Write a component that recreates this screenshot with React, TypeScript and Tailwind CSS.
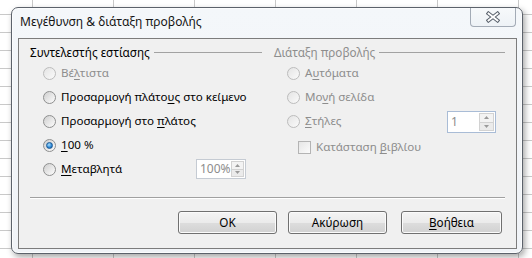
import React from "react";

const font = "font-['Noto_Sans',sans-serif]";

function Radio({ checked, disabled }: { checked?: boolean; disabled?: boolean }) {
  return (
    <span
      className={`flex h-[13px] w-[13px] shrink-0 items-center justify-center rounded-full border ${
        disabled
          ? "border-[#bcbcbc] bg-[linear-gradient(135deg,#e4e4e4,#fafafa)]"
          : "border-[#8e8f8f] bg-[linear-gradient(135deg,#cfcfcf,#fdfdfd)]"
      }`}
    >
      {checked && (
        <span className="h-[7px] w-[7px] rounded-full border border-[#1b5a96] bg-[radial-gradient(circle_at_40%_35%,#a8e0ff,#2c86d4_60%,#17558f)]" />
      )}
    </span>
  );
}

function Arrow({ up }: { up?: boolean }) {
  return (
    <svg width="5" height="3" viewBox="0 0 5 3">
      <path d={up ? "M0 3 L2.5 0 L5 3 Z" : "M0 0 L2.5 3 L5 0 Z"} fill="#9a9a9a" />
    </svg>
  );
}

function Spin({ value, blue, cls }: { value: string; blue?: boolean; cls: string }) {
  return (
    <div className={`flex border bg-white ${blue ? "border-[#a9bcd6]" : "border-[#c5cbd3]"} ${cls}`}>
      <span className="flex flex-1 items-center pl-[3px] text-[12px] text-[#8d8d8d]">{value}</span>
      <div className="my-[1px] mr-[1px] flex w-[15px] flex-col">
        <div className="flex flex-1 items-center justify-center border border-[#d2d2d2] bg-[#f3f3f3]">
          <Arrow up />
        </div>
        <div className="flex flex-1 items-center justify-center border border-t-0 border-[#d2d2d2] bg-[#ebebeb]">
          <Arrow />
        </div>
      </div>
    </div>
  );
}

function Heading({ children, muted }: { children: React.ReactNode; muted?: boolean }) {
  return (
    <div className="flex h-[16px] items-center">
      <span className={`text-[11.7px] leading-[16px] ${muted ? "text-[#8d8d8d]" : "text-black"}`}>{children}</span>
      <span className="ml-[4px] h-px flex-1 bg-[#a2a2a2]" />
    </div>
  );
}

function Row({
  children,
  checked,
  disabled,
  extra,
}: {
  children: React.ReactNode;
  checked?: boolean;
  disabled?: boolean;
  extra?: React.ReactNode;
}) {
  return (
    <div className="flex h-[24px] items-center pl-[13px]">
      <Radio checked={checked} disabled={disabled} />
      <span className={`ml-[5px] flex-1 text-[11.6px] ${disabled ? "text-[#8d8d8d]" : "text-black"}`}>{children}</span>
      {extra}
    </div>
  );
}

function Btn({ children, className = "" }: { children: React.ReactNode; className?: string }) {
  return (
    <div
      className={`flex h-[23px] w-[99px] items-center justify-center rounded-[3px] border border-[#707070] bg-[linear-gradient(to_bottom,#f4f4f4_0%,#ebebeb_50%,#dddddd_52%,#d1d1d1_100%)] text-[11.7px] text-black shadow-[inset_0_0_0_1px_#fbfbfb] ${className}`}
    >
      {children}
    </div>
  );
}

export default function App() {
  return (
    <div
      className={`h-[258px] w-[532px] overflow-hidden bg-white bg-[linear-gradient(to_right,#c9c9c9_1px,transparent_1px),linear-gradient(to_bottom,#c9c9c9_1px,transparent_1px)] bg-[size:81px_18px] bg-[position:32px_14px] pl-[11px] pt-[7px] ${font}`}
    >
      <div className="flex h-[247px] w-[512px] flex-col rounded-[7px] border border-[#5c626b] bg-[linear-gradient(to_bottom,#f4f7fa,#f0f3f7)] pb-[4px] pl-[6px] pr-[5px] shadow-[2px_3px_6px_rgba(0,0,0,0.35),inset_0_0_0_1px_#fbfcfd]">
        <div className="flex h-[30px] items-start">
          <span className="mt-[6px] ml-[2px] flex-1 text-[12px] leading-[16px] text-[#151515]">
            Μεγέθυνση &amp; διάταξη προβολής
          </span>
          <div className="mr-[1px] flex h-[19px] w-[46px] items-center justify-center rounded-b-[4px] border border-t-0 border-[#a3abb6] bg-[linear-gradient(to_bottom,#f7f9fb,#eef2f6)]">
            <svg width="14" height="12" viewBox="0 0 14 12">
              <path d="M2.5 2.5 L11.5 9.5 M11.5 2.5 L2.5 9.5" stroke="#5a626d" strokeWidth="3.8" strokeLinecap="square" />
              <path d="M2.5 2.5 L11.5 9.5 M11.5 2.5 L2.5 9.5" stroke="#ffffff" strokeWidth="1.8" strokeLinecap="square" />
            </svg>
          </div>
        </div>
        <div className="h-[211px] w-[499px] border border-[#7c7c7c] bg-[#f0f0f0] pl-[11px] pr-[11px] pt-[5px]">
          <div className="flex">
            <div className="w-[232px]">
              <Heading>Συντελεστής εστίασης</Heading>
              <div className="mt-[1px]">
                <Row disabled>
                  Βέ<span className="underline underline-offset-2">λ</span>τιστα
                </Row>
                <Row>
                  Προσαρμογή πλάτο<span className="underline underline-offset-2">υ</span>ς στο κείμενο
                </Row>
                <Row>
                  Προσαρμογή στο <span className="underline underline-offset-2">π</span>λάτος
                </Row>
                <Row checked>
                  <span className="underline underline-offset-2">1</span>00 %
                </Row>
                <Row extra={<Spin value="100%" cls="h-[20px] w-[50px] mr-[16px]" />}>
                  <span className="underline underline-offset-2">Μ</span>εταβλητά
                </Row>
              </div>
            </div>
            <div className="ml-[12px] w-[231px]">
              <Heading muted>Διάταξη προβολής</Heading>
              <div className="mt-[1px]">
                <Row disabled>
                  Α<span className="underline underline-offset-2">υ</span>τόματα
                </Row>
                <Row disabled>
                  Μο<span className="underline underline-offset-2">ν</span>ή σελίδα
                </Row>
                <Row disabled extra={<Spin value="1" blue cls="h-[22px] w-[49px] mr-[9px] mt-[2px]" />}>
                  <span className="underline underline-offset-2">Σ</span>τήλες
                </Row>
                <div className="mt-[4px] flex h-[20px] items-center pl-[24px]">
                  <span className="h-[13px] w-[13px] border border-[#b4b4b4] bg-[linear-gradient(135deg,#e6e6e6,#fbfbfb)]" />
                  <span className="ml-[5px] text-[11.6px] text-[#8d8d8d]">
                    Κατάσταση <span className="underline underline-offset-2">β</span>ιβλίου
                  </span>
                </div>
              </div>
            </div>
          </div>
          <div className="mt-[16px] h-px bg-[#a0a0a0] shadow-[0_1px_0_#ffffff]" />
          <div className="mt-[13px] flex">
            <Btn className="ml-[148px]">OK</Btn>
            <Btn className="ml-[11px]">Ακύρωση</Btn>
            <Btn className="ml-[14px] w-[101px]">
              <span className="underline underline-offset-2">Β</span>οήθεια
            </Btn>
          </div>
        </div>
      </div>
    </div>
  );
}
